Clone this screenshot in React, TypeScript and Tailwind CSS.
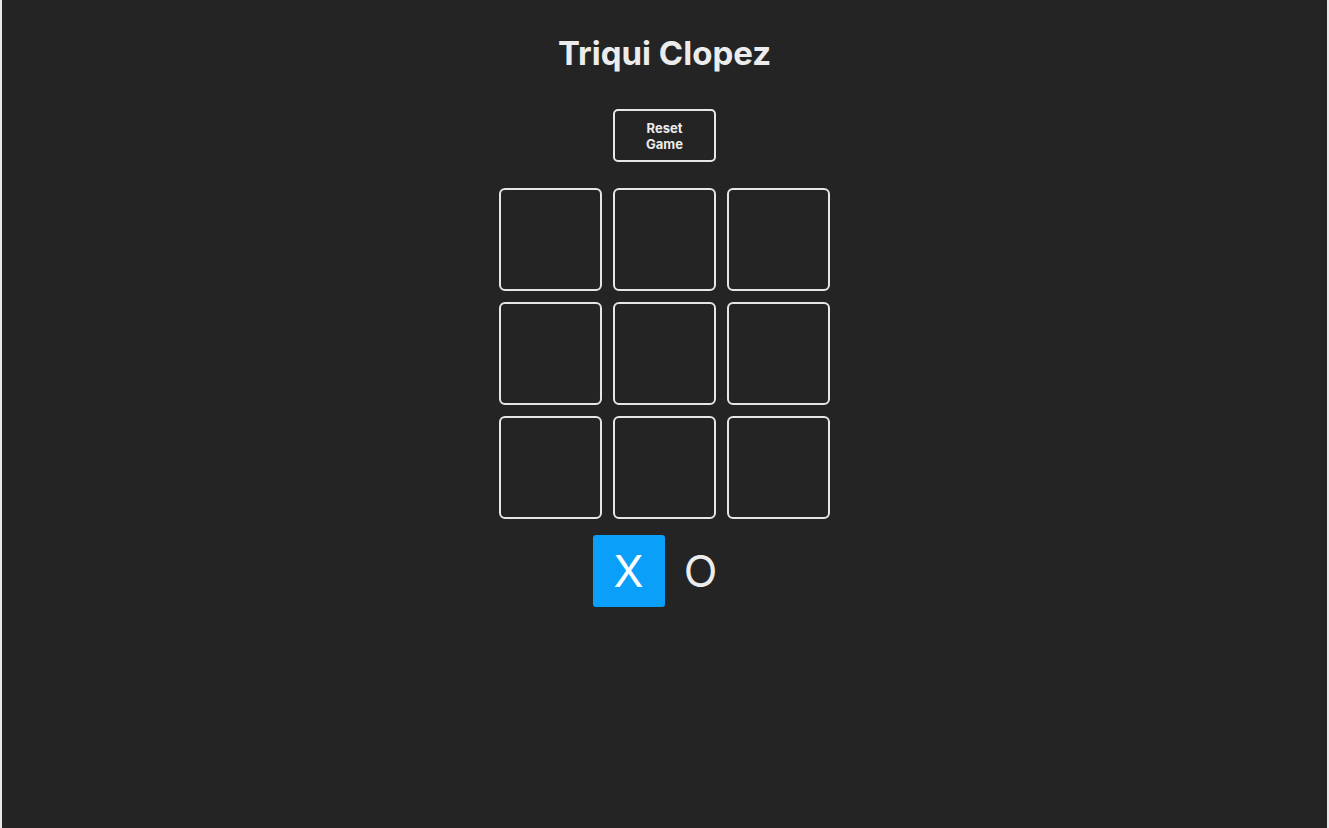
import { useState } from "react";

type Player = "X" | "O";

export default function App() {
  const [board, setBoard] = useState<(Player | null)[]>(Array(9).fill(null));
  const [turn, setTurn] = useState<Player>("X");

  const play = (i: number) => {
    if (board[i]) return;
    const next = [...board];
    next[i] = turn;
    setBoard(next);
    setTurn(turn === "X" ? "O" : "X");
  };

  const reset = () => {
    setBoard(Array(9).fill(null));
    setTurn("X");
  };

  return (
    <main
      className="flex min-h-[828px] flex-col items-center border-x-2 border-[#e8e8e8] bg-[#242424] text-[#ececec]"
      style={{ fontFamily: "Inter, 'Liberation Sans', sans-serif" }}
    >
      <h1 className="pt-[33px] text-[33px] leading-[40px] font-bold">Triqui Clopez</h1>

      <button
        onClick={reset}
        className="mt-[36px] flex h-[53px] w-[103px] items-center justify-center rounded-[5px] border-2 border-[#e6e6e6] text-[13px] leading-[16px] font-bold"
      >
        Reset
        <br />
        Game
      </button>

      <section className="mt-[26px] grid grid-cols-3 gap-[11px]">
        {board.map((v, i) => (
          <button
            key={i}
            onClick={() => play(i)}
            className="flex h-[103px] w-[103px] items-center justify-center rounded-[6px] border-2 border-[#e6e6e6] text-[44px]"
          >
            {v}
          </button>
        ))}
      </section>

      <section className="mt-[16px] flex">
        {(["X", "O"] as Player[]).map((p) => (
          <div
            key={p}
            className={`flex h-[72px] w-[72px] items-center justify-center rounded-[3px] text-[44px] font-normal ${
              turn === p ? "bg-[#0a9ff8] text-white" : ""
            }`}
          >
            {p}
          </div>
        ))}
      </section>
    </main>
  );
}
